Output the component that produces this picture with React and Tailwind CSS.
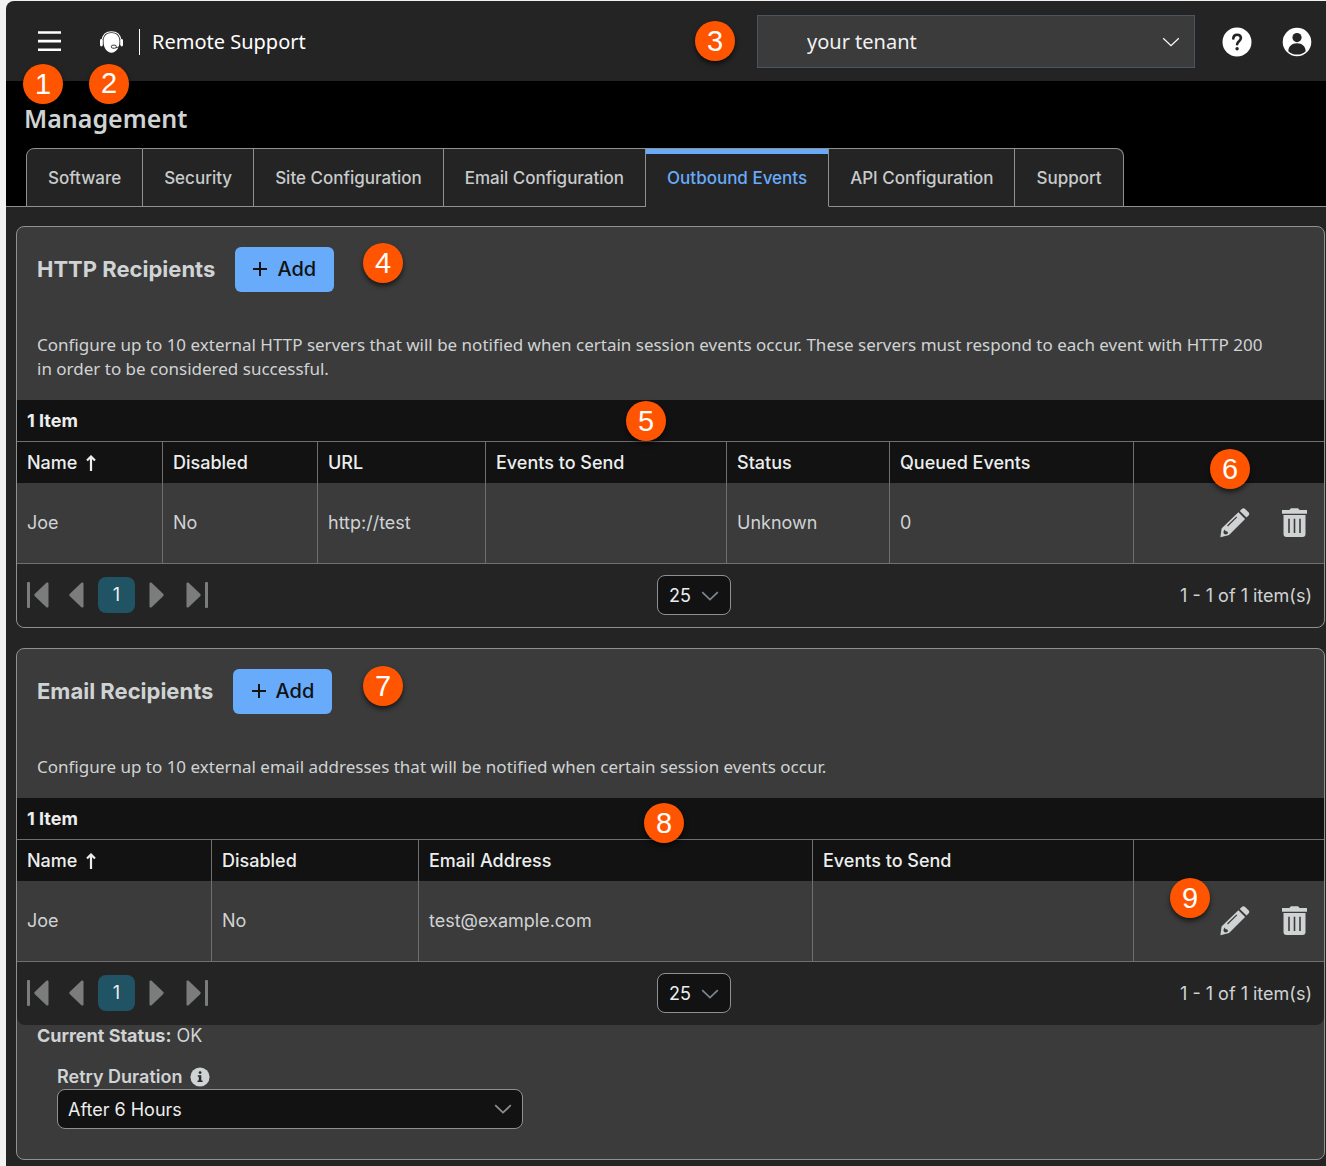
// src/App.jsx
import React, { useState } from 'react';
import clsx from 'clsx';

const TABS = [
  'Software',
  'Security',
  'Site Configuration',
  'Email Configuration',
  'Outbound Events',
  'API Configuration',
  'Support',
];

const HTTP_COLUMNS = [
  { label: 'Name', width: 'w-[146px]', sorted: true },
  { label: 'Disabled', width: 'w-[155px]' },
  { label: 'URL', width: 'w-[168px]' },
  { label: 'Events to Send', width: 'w-auto' },
  { label: 'Status', width: 'w-[163px]' },
  { label: 'Queued Events', width: 'w-[244px]' },
];

const EMAIL_COLUMNS = [
  { label: 'Name', width: 'w-[195px]', sorted: true },
  { label: 'Disabled', width: 'w-[207px]' },
  { label: 'Email Address', width: 'w-auto' },
  { label: 'Events to Send', width: 'w-[321px]' },
];

/* ── Icons ── */

function HeadsetIcon() {
  return (
    <svg width="23" height="22" viewBox="0 0 23 22" aria-hidden="true">
      <path d="M2.100 8.500C3 3.500 6.800.7 11.500.7s8.500 2.800 9.400 7.800" fill="none" stroke="#fff" strokeWidth="1.100" />
      <path d="M11.500 1.900c4.900 0 8.100 3.200 8.100 8.600 0 6.300-3.600 11.200-8.100 11.200S3.400 16.800 3.400 10.500c0-5.400 3.200-8.600 8.100-8.600z" fill="#fff" />
      <path d="M3 8.500v7.300M20 8.500v6.500" stroke="#242424" strokeWidth=".5" />
      <rect x="0" y="8" width="2.800" height="7.500" rx="1.400" fill="#fff" />
      <rect x="20.200" y="8" width="2.800" height="7.500" rx="1.400" fill="#fff" />
      <path d="M20.400 14.500c-1 1.300-2.500 2-4.600 2.200" fill="none" stroke="#242424" strokeWidth=".9" />
      <rect x="11.300" y="14.200" width="5" height="3" rx="1.500" fill="#fff" stroke="#242424" strokeWidth=".9" />
    </svg>
  );
}

function HelpIcon() {
  return (
    <svg width="30" height="30" viewBox="0 0 30 30" aria-hidden="true">
      <circle cx="15" cy="15" r="14.500" fill="#fff" />
      <path d="M11.300 11.500c.1-2.300 1.600-3.800 3.800-3.800s3.800 1.400 3.800 3.400c0 3-3.800 3.100-3.800 6.200" fill="none" stroke="#242424" strokeWidth="2.600" strokeLinecap="round" />
      <circle cx="15.100" cy="21.700" r="1.700" fill="#242424" />
    </svg>
  );
}

function UserIcon() {
  return (
    <svg width="30" height="30" viewBox="0 0 30 30" aria-hidden="true">
      <circle cx="15" cy="15" r="14.300" fill="#fff" />
      <circle cx="15" cy="10.600" r="4.600" fill="#242424" />
      <path d="M6.300 24.200c.2-4.800 3.500-8 8.700-8s8.500 3.200 8.700 8c-2.300 2.200-5.200 3.400-8.700 3.400s-6.400-1.200-8.700-3.400z" fill="#242424" />
    </svg>
  );
}

function ChevronIcon({ thin, className }) {
  return (
    <svg width="18" height="10" viewBox="0 0 18 10" className={className} aria-hidden="true">
      <path d="M1.200 1.200L9 8.600l7.800-7.400" fill="none" stroke="currentColor" strokeWidth={thin ? 1.2 : 1.7} />
    </svg>
  );
}

function SortIcon() {
  return (
    <svg width="10" height="16" viewBox="0 0 10 16" aria-hidden="true">
      <path d="M5 16V2M1 5.500L5 1.500l4 4" fill="none" stroke="currentColor" strokeWidth="2.200" />
    </svg>
  );
}

function PencilIcon() {
  return (
    <svg width="30" height="30" viewBox="0 0 30 30" aria-hidden="true">
      <path
        d="M19.800 2.900l2-2c1-1 2.300-1 3.300 0l3.400 3.400c1 1 1 2.300 0 3.300l-2 2zM18.400 4.300l6.700 6.700L9.300 26.700c-.3.300-.6.400-1 .5L.4 29.300l1.100-8.200c.1-.4.200-.7.500-1z"
        fill="currentColor"
      />
      <path d="M7.500 18L16.800 8.900" stroke="#3b3b3b" strokeWidth="1.300" />
      <path d="M4.400 21.500c-.6 1.300-1 2.500-1 3.600l1.500 1.400c1.200 0 2.300-.4 3.300-1.200l-.9-1.700-1.800-.5z" fill="#3b3b3b" />
    </svg>
  );
}

function TrashIcon() {
  return (
    <svg width="26" height="30" viewBox="0 0 26 30" aria-hidden="true">
      <path d="M1 2h7.500c.5-1.200 1.200-1.700 2.300-1.700h5.400c1.100 0 1.800.5 2.300 1.700H26v3.700H1z" fill="currentColor" />
      <path
        fillRule="evenodd"
        d="M2.500 7h22v18.900c0 2-1 3-3 3h-16c-2 0-3-1-3-3zM7.200 10.700v14.200h1.600V10.700zM12.700 10.700v14.200h1.600V10.700zM18.200 10.700v14.200h1.600V10.700z"
        fill="currentColor"
      />
    </svg>
  );
}

function InfoIcon() {
  return (
    <svg width="20" height="20" viewBox="0 0 20 20" aria-hidden="true">
      <circle cx="10" cy="10" r="9.600" fill="#d0d3d4" />
      <path d="M7.800 8.200h3.500v5.400h1.300v1.500H7.500v-1.500h1.300V9.700h-1z" fill="#2a2a2a" />
      <circle cx="10.100" cy="5.600" r="1.400" fill="#2a2a2a" />
    </svg>
  );
}

// Triangle pointing right; `bar` adds the first/last stop line, `flip` mirrors it.
function PagerIcon({ bar, flip }) {
  const width = bar ? 22 : 15;
  return (
    <svg width={width} height="26" viewBox={`0 0 ${width} 26`} className={clsx(flip && 'rotate-180')} aria-hidden="true">
      <path d="M.5 1.500C.5.500 1.800 0 2.600.8l11.500 11c.8.700.8 1.700 0 2.400l-11.500 11c-.8.800-2.100.3-2.100-.7z" fill="currentColor" />
      {bar && <rect x="19" y="0" width="3" height="26" rx="1" fill="currentColor" />}
    </svg>
  );
}

/* ── Shared pieces ── */

function Callout({ n, className }) {
  return (
    <span
      className={clsx(
        'absolute z-10 flex h-10 w-10 items-center justify-center rounded-full bg-[#ff5500] font-[Liberation_Sans,sans-serif] text-[29px] font-normal leading-none text-white shadow-[0_3px_5px_rgba(0,0,0,0.6)]',
        className
      )}
    >
      {n}
    </span>
  );
}

function Pager({ id }) {
  const [size, setSize] = useState('25');

  return (
    <div className="flex h-[63px] items-center justify-between rounded-b-lg bg-[#242424] pb-px pl-2.5 pr-3">
      <div className="flex items-center text-[#7b7c7c]">
        <button type="button" aria-label="First page"><PagerIcon bar flip /></button>
        <button type="button" aria-label="Previous page" className="ml-5"><PagerIcon flip /></button>
        <button type="button" aria-current="page" className="mx-3.5 h-9 w-[37px] rounded-lg bg-[#205364] text-lg text-[#eceeee]">
          1
        </button>
        <button type="button" aria-label="Next page"><PagerIcon /></button>
        <button type="button" aria-label="Last page" className="ml-[22px]"><PagerIcon bar /></button>
      </div>

      <div className="relative">
        <select
          id={id}
          aria-label="Items per page"
          value={size}
          onChange={(e) => setSize(e.target.value)}
          className="block h-10 w-[74px] appearance-none rounded-lg border border-[#8f9090] bg-[#121212] pl-[11px] pt-0.5 text-lg text-[#eceeee]"
        >
          <option>25</option>
          <option>50</option>
          <option>100</option>
        </select>
        <ChevronIcon className="pointer-events-none absolute right-3 top-4 text-[#7d868c]" />
      </div>

      <span className="pt-0.5 text-lg text-[#d0d3d4]">1 - 1 of 1 item(s)</span>
    </div>
  );
}

function RecipientTable({ columns, row, callout }) {
  return (
    <table className="w-full table-fixed border-separate border-spacing-0 text-left text-lg">
      <thead className="bg-[#121212] text-[#eceeee]">
        <tr className="h-[42px]">
          {columns.map((col) => (
            <th
              key={col.label}
              scope="col"
              className={clsx('border-r border-t border-[#6e6f6f] px-2.5 py-0 font-medium', col.width)}
            >
              <span className="flex items-center gap-[9px]">
                {col.label}
                {col.sorted && <SortIcon />}
              </span>
            </th>
          ))}
          <th scope="col" aria-label="Actions" className="w-[190px] border-t border-[#6e6f6f]" />
        </tr>
      </thead>
      <tbody className="text-[#d0d3d4]">
        <tr className="h-[81px]">
          {row.map((cell, i) => (
            <td key={columns[i].label} className="border-b border-r border-[#6e6f6f] px-2.5 py-0">{cell}</td>
          ))}
          <td className="border-b border-[#6e6f6f] py-0 pr-[17px]">
            <div className="relative flex items-center justify-end gap-[31px]">
              {callout}
              <button type="button" aria-label="Edit recipient"><PencilIcon /></button>
              <button type="button" aria-label="Delete recipient"><TrashIcon /></button>
            </div>
          </td>
        </tr>
      </tbody>
    </table>
  );
}

function RecipientPanel({ id, title, description, columns, row, titleCallout, tableCallout, rowCallout, children }) {
  return (
    <section className="relative rounded-lg border border-[#8f9090] bg-[#3b3b3b]">
      <div className="flex items-center gap-5 px-5 pt-5">
        <h2 className="pb-0.5 text-[22px] font-bold leading-7 text-[#d0d3d4]">{title}</h2>
        <button
          type="button"
          className="flex h-[45px] w-[99px] items-center justify-center gap-2.5 rounded-md bg-[#67abfa] pb-0.5 text-xl font-medium text-[#121212]"
        >
          <svg width="14" height="14" viewBox="0 0 14 14" aria-hidden="true">
            <path d="M7 0v14M0 7h14" stroke="currentColor" strokeWidth="2" />
          </svg>
          Add
        </button>
      </div>
      {titleCallout}

      <p className="mb-[19px] mt-[41px] pl-5 pr-14 font-[Noto_Sans,sans-serif] text-[17px] leading-6 text-[#d0d3d4]">{description}</p>

      <div className="relative flex h-[41px] items-center bg-[#121212] px-2.5 text-lg font-bold text-[#eceeee]">
        1 Item
        {tableCallout}
      </div>
      <RecipientTable columns={columns} row={row} callout={rowCallout} />
      <Pager id={`${id}-page-size`} />
      {children}
    </section>
  );
}

/* ── Page ── */

export default function App() {
  const [tab, setTab] = useState('Outbound Events');
  const [tenant, setTenant] = useState('your tenant');
  const [retry, setRetry] = useState('After 6 Hours');

  return (
    <div className="min-h-screen bg-[#f2f2f2] pl-1.5 pt-px font-[Inter,sans-serif]">
      <div className="min-h-[calc(100vh-1px)] rounded-tl-lg bg-[#242424]">
        <header className="flex h-20 items-center pl-8 pr-3.5 pt-px text-white">
          <div className="relative">
            <button type="button" aria-label="Menu" className="block">
              <svg width="23" height="21" viewBox="0 0 23 21" aria-hidden="true">
                <path d="M0 1.500h23M0 10.100h23M0 18.700h23" stroke="currentColor" strokeWidth="2.600" />
              </svg>
            </button>
            <Callout n={1} className="-left-[15px] top-[33px]" />
          </div>
          <div className="relative ml-[39px]">
            <HeadsetIcon />
            <Callout n={2} className="-left-[11px] top-[33px]" />
          </div>
          <span className="ml-4 border-l border-white py-px pl-3 font-[Noto_Sans,sans-serif] text-xl leading-6">
            Remote Support
          </span>

          <div className="relative ml-auto">
            <Callout n={3} className="-left-[62px] top-1.5" />
            <select
              aria-label="Tenant"
              value={tenant}
              onChange={(e) => setTenant(e.target.value)}
              className="block h-[53px] w-[438px] appearance-none border border-[#4a5560] bg-[#3b3b3b] pl-[49px] font-[Noto_Sans,sans-serif] text-xl text-[#f2f2f2]"
            >
              <option>your tenant</option>
            </select>
            <ChevronIcon thin className="pointer-events-none absolute right-[15px] top-[22px]" />
          </div>
          <button type="button" aria-label="Help" className="ml-[27px]"><HelpIcon /></button>
          <button type="button" aria-label="Account" className="ml-[30px]"><UserIcon /></button>
        </header>

        <div className="border-b border-[#8f9090] bg-black">
          <h1 className="px-[18px] pb-3.5 pt-[21px] font-[Noto_Sans,sans-serif] text-[25px] font-semibold leading-8 text-[#d0d3d4]">
            Management
          </h1>
          <nav role="tablist" className="-mb-px flex px-5">
            {TABS.map((name) => {
              const active = name === tab;
              return (
                <button
                  key={name}
                  type="button"
                  role="tab"
                  aria-selected={active}
                  onClick={() => setTab(name)}
                  className={clsx(
                    'h-[59px] border-y border-r border-[#8f9090] bg-[#242424] px-[21px] pt-0.5 text-[17px] font-medium first:rounded-tl-lg first:border-l last:rounded-tr-lg',
                    active
                      ? 'border-b-[#242424] text-[#67abfa] shadow-[inset_0_5px_0_#67abfa]'
                      : 'text-[#c8cbcb]'
                  )}
                >
                  {name}
                </button>
              );
            })}
          </nav>
        </div>

        <main className="flex flex-col gap-5 pb-1.5 pl-2.5 pr-px pt-[19px]">
          <RecipientPanel
            id="http"
            title="HTTP Recipients"
            description="Configure up to 10 external HTTP servers that will be notified when certain session events occur. These servers must respond to each event with HTTP 200 in order to be considered successful."
            columns={HTTP_COLUMNS}
            row={['Joe', 'No', 'http://test', '', 'Unknown', '0']}
            titleCallout={<Callout n={4} className="left-[346px] top-4" />}
            tableCallout={<Callout n={5} className="left-[609px] top-px" />}
            rowCallout={<Callout n={6} className="-top-[59px] right-[57px]" />}
          />

          <RecipientPanel
            id="email"
            title="Email Recipients"
            description="Configure up to 10 external email addresses that will be notified when certain session events occur."
            columns={EMAIL_COLUMNS}
            row={['Joe', 'No', 'test@example.com', '']}
            titleCallout={<Callout n={7} className="left-[346px] top-[17px]" />}
            tableCallout={<Callout n={8} className="left-[627px] top-[5px]" />}
            rowCallout={<Callout n={9} className="-top-7 right-[97px]" />}
          >
            <div className="px-5 pb-[30px] text-lg text-[#d0d3d4]">
              <p className="leading-[22px]">
                <strong className="font-bold">Current Status:</strong> OK
              </p>
              <div className="pl-5 pt-[18px]">
                <div className="flex items-center gap-2 leading-6">
                  <label htmlFor="retry" className="font-semibold">Retry Duration</label>
                  <InfoIcon />
                </div>
                <div className="relative w-[466px] max-w-full">
                  <select
                    id="retry"
                    value={retry}
                    onChange={(e) => setRetry(e.target.value)}
                    className="block h-10 w-full appearance-none rounded-lg border border-[#8f9090] bg-[#121212] pl-2.5 pt-0.5 text-lg text-[#eceeee]"
                  >
                    <option>After 6 Hours</option>
                    <option>After 12 Hours</option>
                    <option>After 24 Hours</option>
                  </select>
                  <ChevronIcon className="pointer-events-none absolute right-[11px] top-[15px] text-[#8f9090]" />
                </div>
              </div>
            </div>
          </RecipientPanel>
        </main>
      </div>
    </div>
  );
}
